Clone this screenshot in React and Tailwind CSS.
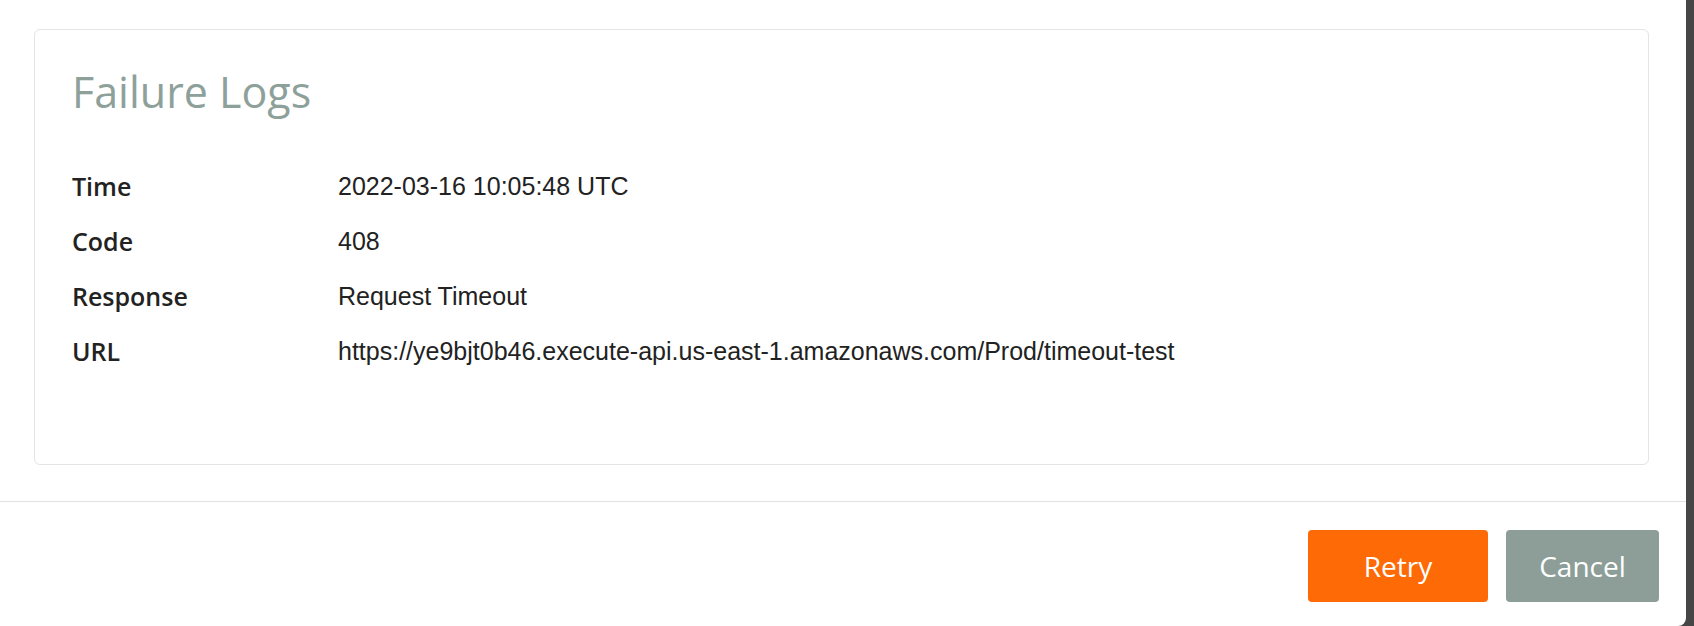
import React from 'react'

const rows = [
  { label: 'Time', value: '2022-03-16 10:05:48 UTC' },
  { label: 'Code', value: '408' },
  { label: 'Response', value: 'Request Timeout' },
  { label: 'URL', value: 'https://ye9bjt0b46.execute-api.us-east-1.amazonaws.com/Prod/timeout-test' },
]

export default function App() {
  return (
    <div className="w-[1694px] h-[626px] bg-[#464646] flex">
      <div className="w-[1686px] h-full bg-white rounded-br-[8px] flex flex-col">
        {/* Card */}
        <div className="pt-[29px] pl-[34px] pr-[37px]">
          <div className="h-[436px] border border-[#e4e4e4] rounded-[6px] pt-[40px] pl-[37px]">
            <h2
              className="text-[43px] leading-none text-[#8da19a] font-normal"
              style={{ fontFamily: '"Open Sans", sans-serif' }}
            >
              Failure Logs
            </h2>
            <div className="mt-[46px]">
              {rows.map(r => (
                <div key={r.label} className="flex h-[55px] leading-[55px]">
                  <span
                    className="w-[266px] shrink-0 text-[25px] font-semibold text-[#222]"
                    style={{ fontFamily: '"Open Sans", sans-serif' }}
                  >
                    {r.label}
                  </span>
                  <span
                    className="text-[25px] text-[#222]"
                    style={{ fontFamily: '"Liberation Sans", Arial, sans-serif' }}
                  >
                    {r.value}
                  </span>
                </div>
              ))}
            </div>
          </div>
        </div>

        {/* Footer */}
        <div className="mt-[36px] border-t border-[#e2e2e2] pt-[28px] pr-[27px] flex justify-end gap-[18px]">
          <button
            className="w-[180px] h-[72px] rounded-[4px] bg-[#fd6a06] text-white text-[28px]"
            style={{ fontFamily: '"Open Sans", sans-serif' }}
          >
            Retry
          </button>
          <button
            className="w-[153px] h-[72px] rounded-[4px] bg-[#8c9e97] text-white text-[28px]"
            style={{ fontFamily: '"Open Sans", sans-serif' }}
          >
            Cancel
          </button>
        </div>
      </div>
    </div>
  )
}
